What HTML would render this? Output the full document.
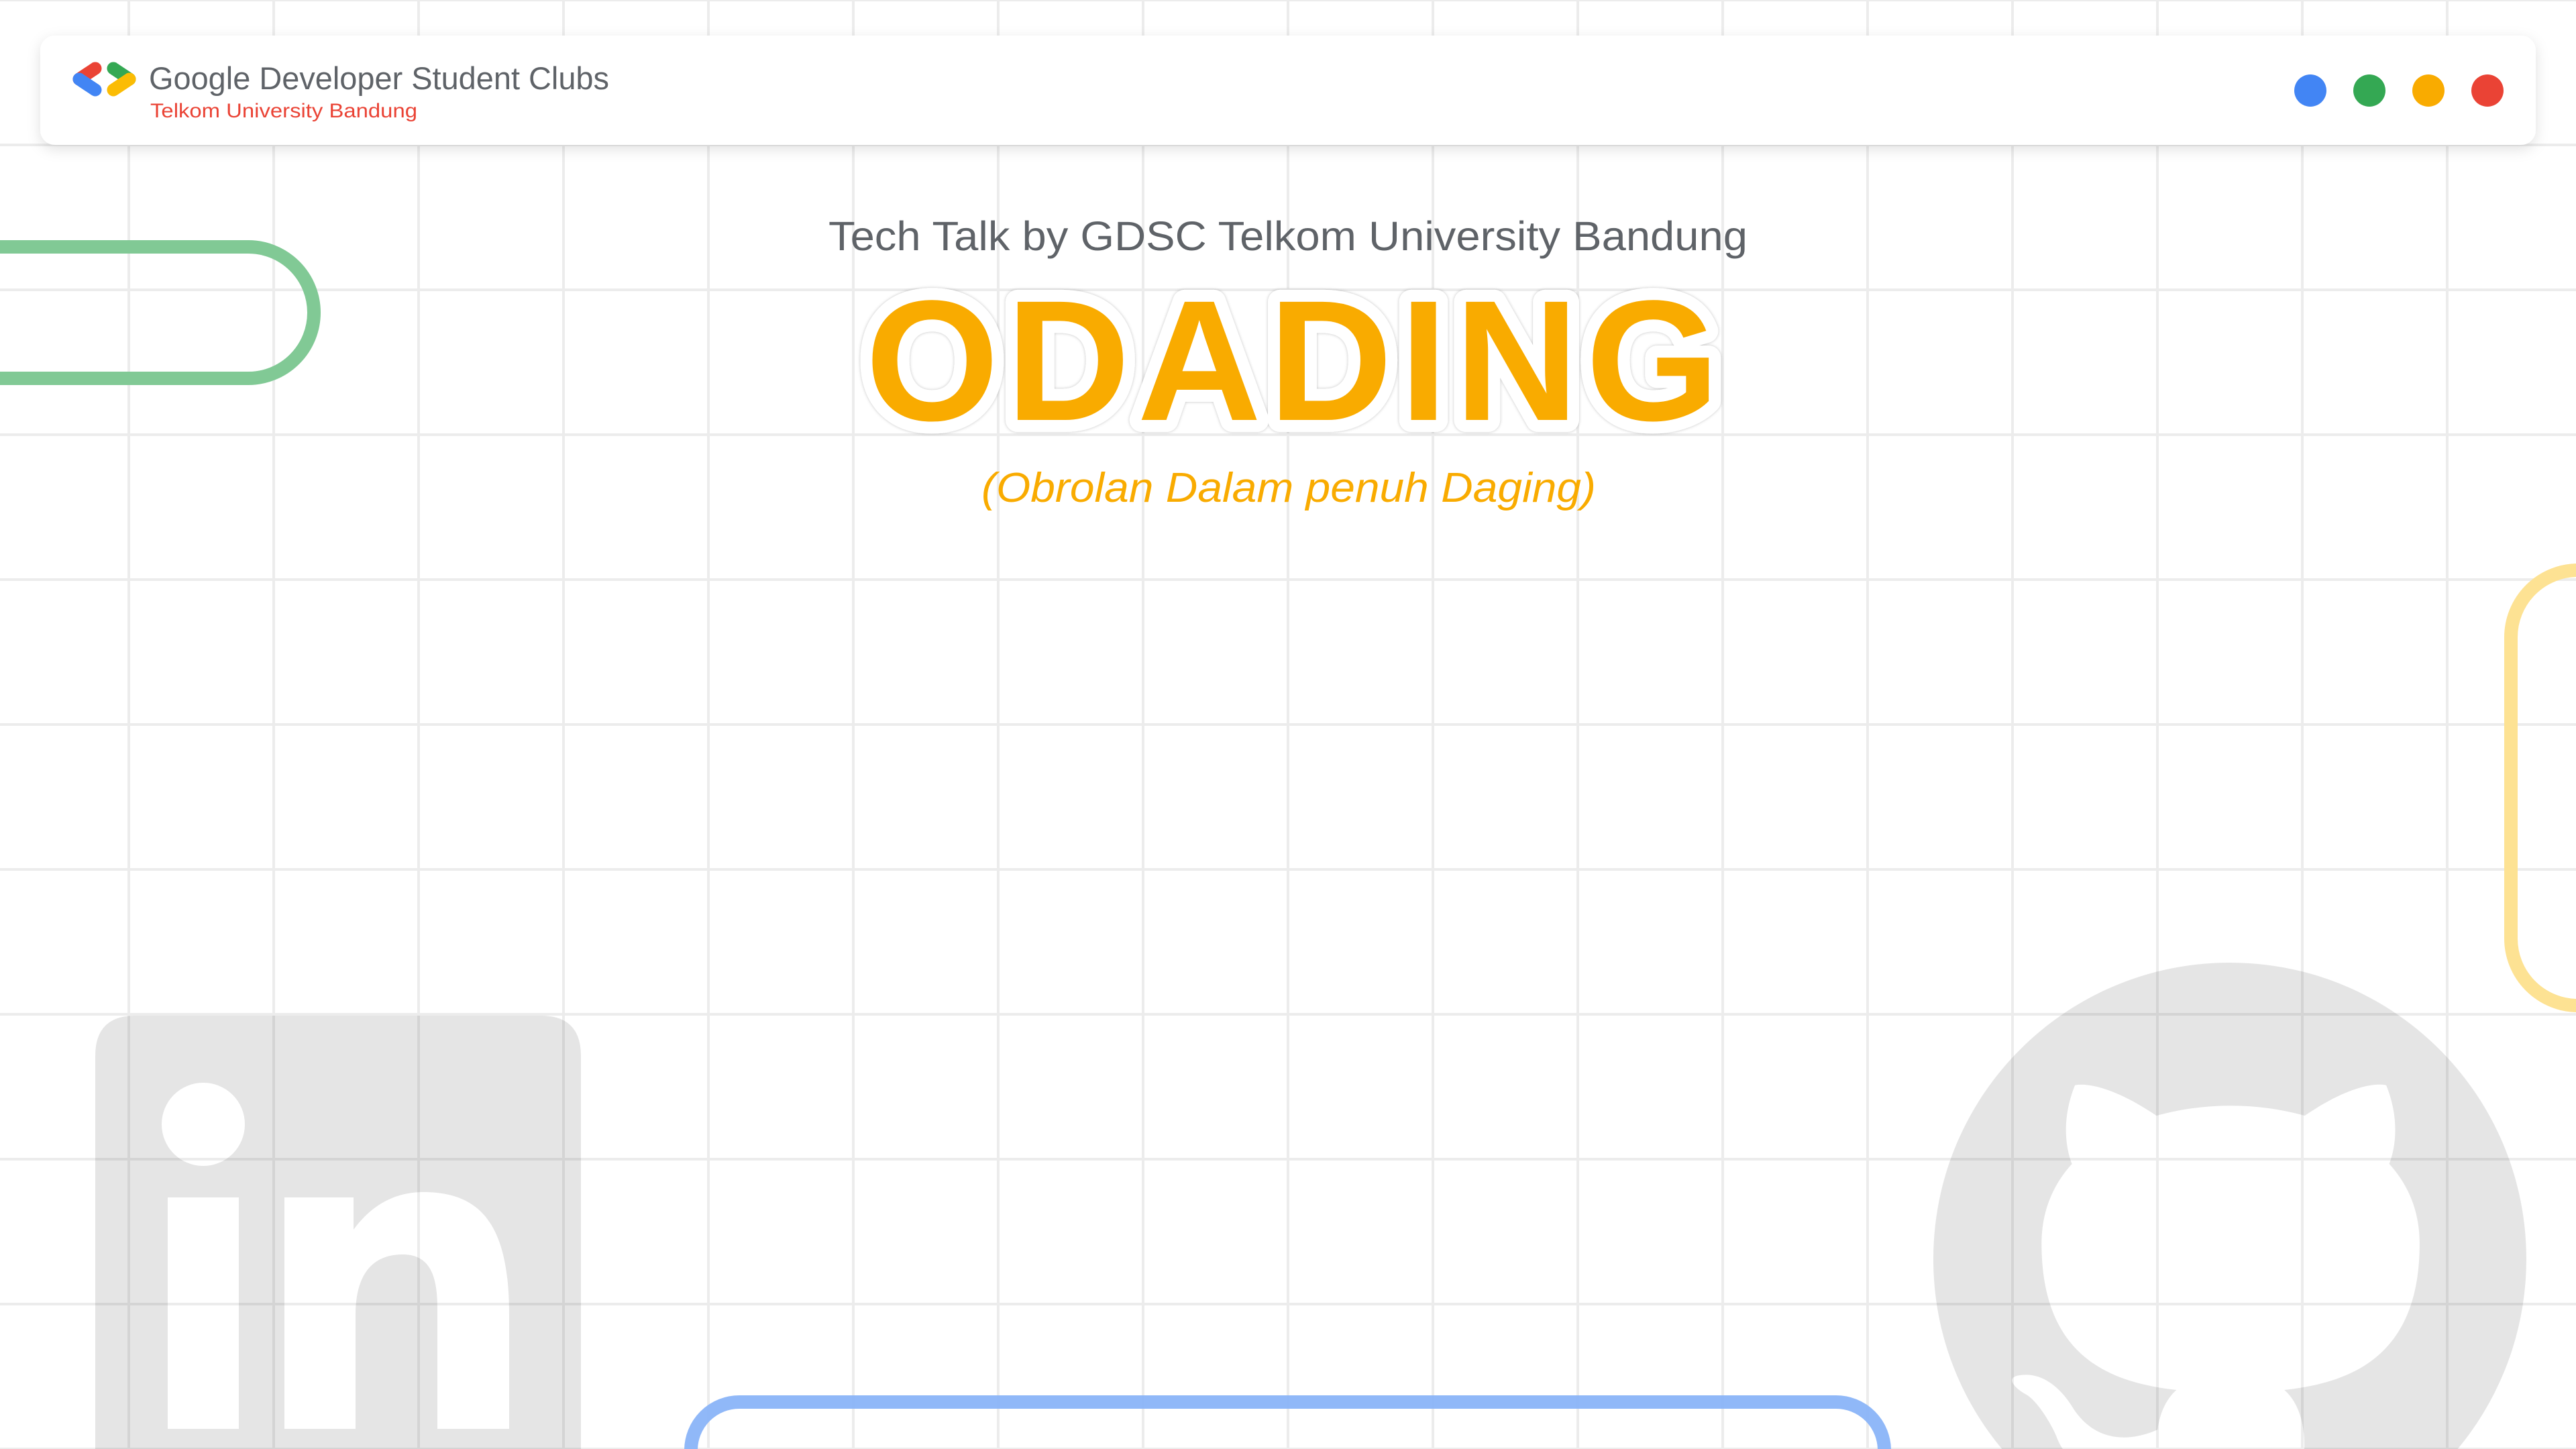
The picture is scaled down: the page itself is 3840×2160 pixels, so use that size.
<!DOCTYPE html>
<html><head><meta charset="utf-8"><style>
html,body{margin:0;padding:0;background:#fff;width:3840px;height:2160px;overflow:hidden}
svg{display:block}
</style></head><body>
<svg width="3840" height="2160" viewBox="0 0 3840 2160" xmlns="http://www.w3.org/2000/svg" style="overflow:hidden">
<defs>
<pattern id="grid" x="0" y="0" width="216" height="216" patternUnits="userSpaceOnUse">
<rect x="190" y="0" width="4" height="216" fill="#ececec"/>
<rect x="0" y="-2" width="216" height="4" fill="#ececec"/>
<rect x="0" y="214" width="216" height="4" fill="#ececec"/>
</pattern>
<filter id="sh" x="-5%" y="-50%" width="110%" height="200%">
<feDropShadow dx="0" dy="6" stdDeviation="10" flood-color="#000" flood-opacity="0.12"/>
</filter>
<filter id="tsh" x="-10%" y="-30%" width="120%" height="160%">
<feDropShadow dx="0" dy="0" stdDeviation="2" flood-color="#000" flood-opacity="0.25"/>
</filter>
<clipPath id="page"><rect width="3840" height="2160"/></clipPath>
</defs>
<g clip-path="url(#page)">
<rect width="3840" height="2160" fill="#fff"/>
<rect width="3840" height="2160" fill="url(#grid)"/>

<rect x="-300" y="368" width="768" height="196" rx="98" fill="none" stroke="#81c995" stroke-width="20"/>
<rect x="3743" y="850" width="600" height="649" rx="100" fill="none" stroke="#fde293" stroke-width="20"/>
<rect x="1030" y="2090" width="1779" height="400" rx="72" fill="none" stroke="#8ab4f8" stroke-opacity="0.95" stroke-width="20"/>

<path fill="#000" fill-opacity="0.1" fill-rule="evenodd" d="M202 1514 H806 Q866 1514 866 1574 V2200 H142 V1574 Q142 1514 202 1514 Z
M303 1676 m-62 0 a62 62 0 1 0 124 0 a62 62 0 1 0 -124 0 Z
M250 1785 H356 V2130 H250 Z
M424 1785 H527 V1833 C555 1795 590 1777 631 1777 C720 1777 759 1830 759 1960 V2130 H652 V1950 C652 1900 640 1870 600 1870 C555 1870 530 1900 530 1960 V2130 H424 Z"/>

<g transform="translate(2882,1435) scale(55.25)">
<path fill="#000" fill-opacity="0.1" fill-rule="evenodd" d="M8 0C3.58 0 0 3.58 0 8c0 3.540 2.29 6.53 5.47 7.59.4.07.55-.17.55-.38 0-.19-.01-.82-.01-1.49-2.010.37-2.53-.49-2.69-.94-.09-.23-.48-.94-.82-1.13-.28-.15-.68-.52-.01-.53.63-.01 1.08.58 1.23.82.72 1.21 1.87.87 2.33.66.07-.52.28-.87.51-1.070-1.78-.2-3.64-.89-3.64-3.95 0-.87.31-1.59.82-2.15-.08-.2-.36-1.02.08-2.12 0 0 .67-.21 2.2.82.64-.18 1.32-.27 2-.27.68 0 1.36.09 2 .27 1.53-1.04 2.2-.82 2.2-.82.44 1.1.16 1.92.08 2.12.51.56.82 1.27.82 2.15 0 3.07-1.87 3.75-3.65 3.95.29.25.54.73.54 1.48 0 1.07-.01 1.93-.01 2.2 0 .21.15.46.55.38A8.013 8.013 0 0016 8c0-4.42-3.58-8-8-8z"/>
</g>

<rect x="60" y="53" width="3720" height="163" rx="22" fill="#fff" filter="url(#sh)"/>
<g stroke-width="19" stroke-linecap="round" fill="none">
<line x1="142" y1="102" x2="118" y2="118" stroke="#ea4335"/>
<line x1="118" y1="118" x2="142" y2="134" stroke="#4285f4"/>
<line x1="169" y1="102" x2="193" y2="118" stroke="#34a853"/>
<line x1="193" y1="118" x2="169" y2="134" stroke="#fbbc04"/>
</g>
<text x="222" y="133" font-family="Liberation Sans, sans-serif" font-size="47" fill="#5f6368" textLength="686" lengthAdjust="spacingAndGlyphs">Google Developer Student Clubs</text>
<text x="224" y="175" font-family="Liberation Sans, sans-serif" font-size="30" fill="#ea4335" textLength="398" lengthAdjust="spacingAndGlyphs">Telkom University Bandung</text>
<circle cx="3444" cy="135" r="24" fill="#4285f4"/>
<circle cx="3532" cy="135" r="24" fill="#34a853"/>
<circle cx="3620" cy="135" r="24" fill="#f9ab00"/>
<circle cx="3708" cy="135" r="24" fill="#ea4335"/>

<text x="1235" y="373" font-family="Liberation Sans, sans-serif" font-size="61" fill="#5f6368" textLength="1370" lengthAdjust="spacingAndGlyphs">Tech Talk by GDSC Telkom University Bandung</text>
<g filter="url(#tsh)">
<text x="1290" y="626" font-family="Liberation Sans, sans-serif" font-weight="bold" font-size="256" fill="#f9ab00" stroke="#fff" stroke-width="36" stroke-linejoin="round" paint-order="stroke" textLength="1273" lengthAdjust="spacing">ODADING</text>
</g>
<text x="1463" y="748" font-family="Liberation Sans, sans-serif" font-style="italic" font-size="62" fill="#f9ab00" textLength="916" lengthAdjust="spacingAndGlyphs">(Obrolan Dalam penuh Daging)</text>
</g>
</svg>
</body></html>
